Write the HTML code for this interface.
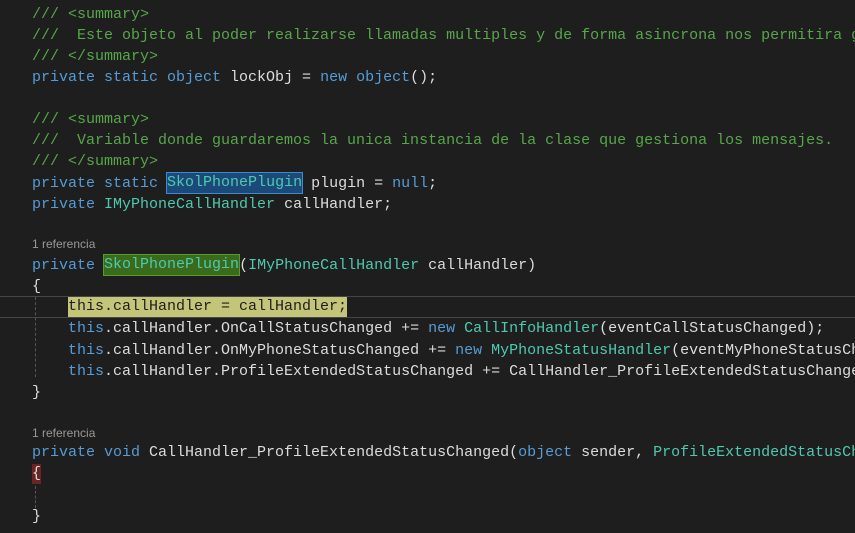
<!DOCTYPE html><html><head><style>
body{margin:0;width:855px;height:533px;background:#1e1e1e;overflow:hidden;position:relative;font-family:"Liberation Mono",monospace;font-size:15px;color:#dcdcdc}
.l{position:absolute;left:32px;height:21px;line-height:21px;white-space:pre}
.c{color:#57a64a}.k{color:#569cd6}.t{color:#4ec9b0}
.r{position:absolute;left:32px;font:12px "Liberation Sans",sans-serif;color:#999}
.hb,.hg,.hy,.hr{display:inline-block;height:20px;line-height:20px;vertical-align:top}
.hb{background:#1c4a78;outline:1px solid #3d8ad0}
.hg{background:#3a6b1c;outline:1px solid #5a9a2a}
.hy{background:#c5c57a;color:#1e1e1e}
.hr{background:#6b2424}
.cur{position:absolute;left:0;width:855px;top:296px;height:20px;border-top:1px solid #464646;border-bottom:1px solid #464646}
.g{position:absolute;left:35px;border-left:1px dashed #555;width:0}
</style></head><body>
<div class="cur"></div>
<div class="g" style="top:297px;height:80px"></div>
<div class="g" style="top:486px;height:22px"></div>
<div class="l c" style="top:4px">/// &lt;summary&gt;</div>
<div class="l c" style="top:25px">///  Este objeto al poder realizarse llamadas multiples y de forma asincrona nos permitira g</div>
<div class="l c" style="top:46px">/// &lt;/summary&gt;</div>
<div class="l" style="top:67px"><span class="k">private static object</span> lockObj = <span class="k">new object</span>();</div>
<div class="l c" style="top:109px">/// &lt;summary&gt;</div>
<div class="l c" style="top:130px">///  Variable donde guardaremos la unica instancia de la clase que gestiona los mensajes.</div>
<div class="l c" style="top:151px">/// &lt;/summary&gt;</div>
<div class="l" style="top:173px"><span class="k">private static</span> <span class="t hb">SkolPhonePlugin</span> plugin = <span class="k">null</span>;</div>
<div class="l" style="top:194px"><span class="k">private</span> <span class="t">IMyPhoneCallHandler</span> callHandler;</div>
<div class="r" style="top:237px">1 referencia</div>
<div class="l" style="top:255px"><span class="k">private</span> <span class="t hg">SkolPhonePlugin</span>(<span class="t">IMyPhoneCallHandler</span> callHandler)</div>
<div class="l" style="top:276px">{</div>
<div class="l" style="top:297px">    <span class="hy">this.callHandler = callHandler;</span></div>
<div class="l" style="top:318px">    <span class="k">this</span>.callHandler.OnCallStatusChanged += <span class="k">new</span> <span class="t">CallInfoHandler</span>(eventCallStatusChanged);</div>
<div class="l" style="top:340px">    <span class="k">this</span>.callHandler.OnMyPhoneStatusChanged += <span class="k">new</span> <span class="t">MyPhoneStatusHandler</span>(eventMyPhoneStatusCh</div>
<div class="l" style="top:361px">    <span class="k">this</span>.callHandler.ProfileExtendedStatusChanged += CallHandler_ProfileExtendedStatusChange</div>
<div class="l" style="top:382px">}</div>
<div class="r" style="top:426px">1 referencia</div>
<div class="l" style="top:442px"><span class="k">private void</span> CallHandler_ProfileExtendedStatusChanged(<span class="k">object</span> sender, <span class="t">ProfileExtendedStatusCh</span></div>
<div class="l" style="top:464px"><span class="hr">{</span></div>
<div class="l" style="top:506px">}</div>
</body></html>
